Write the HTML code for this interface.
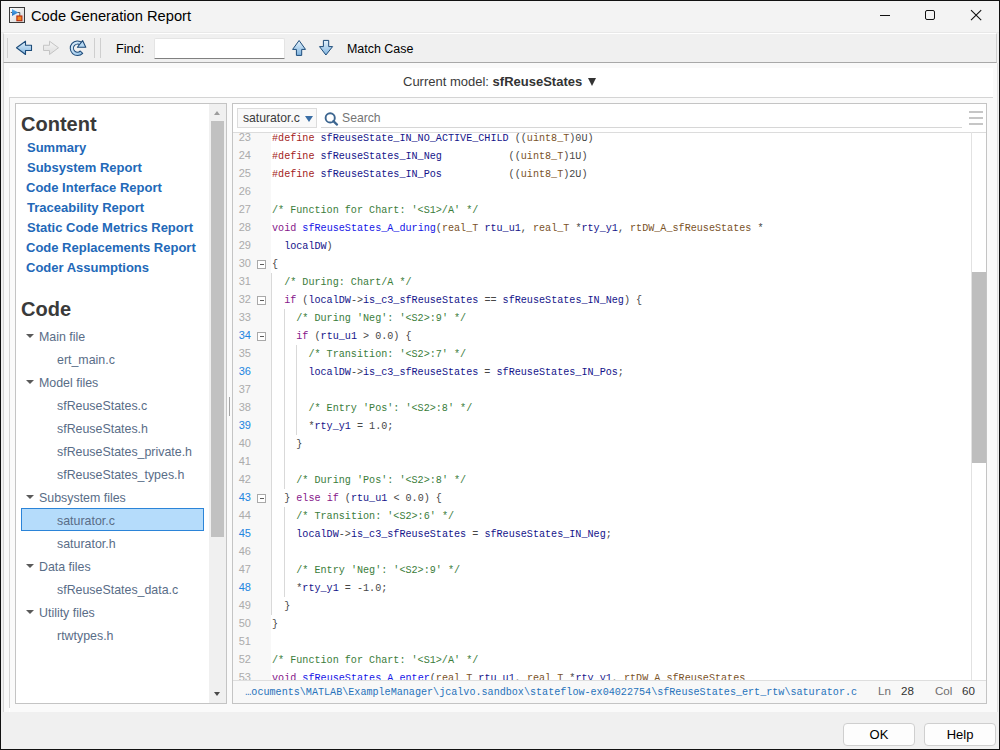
<!DOCTYPE html>
<html><head><meta charset="utf-8">
<style>
*{margin:0;padding:0;box-sizing:border-box}
html,body{width:1000px;height:750px;overflow:hidden;background:#f0f0f0;font-family:"Liberation Sans",sans-serif}
.a{position:absolute}
#win{position:absolute;left:0;top:0;width:1000px;height:750px;border:1px solid #111;background:#f0f0f0}
#title{left:31px;top:6px;font-size:14.7px;color:#000;line-height:20px;white-space:nowrap}
#tb{left:3px;top:33px;width:994px;height:30px;background:#f0f0f0;border-top:1px solid #fff;border-bottom:1px solid #a8a8a8;border-left:1px solid #d0d0d0;border-right:1px solid #d0d0d0}
#content{left:3px;top:63px;width:995px;height:649px;background:#fafafa;border-left:1px solid #d6d6d6;border-right:1px solid #e0e0e0}
.txt{white-space:nowrap}
#lp{left:15px;top:103px;width:212px;height:601px;border:1px solid #c8c8c8;background:#fff}
#rp{left:232px;top:103px;width:755px;height:601px;border:1px solid #c8c8c8;background:#fff}
.lnk{position:absolute;left:12px;font-size:13px;font-weight:bold;color:#1f62ad;white-space:nowrap;line-height:16px}
.h{position:absolute;left:5px;font-size:20px;font-weight:bold;color:#333;white-space:nowrap;line-height:24px}
.ti{position:absolute;font-size:12.6px;color:#4f627a;white-space:nowrap;line-height:16px}
.tri{position:absolute;width:0;height:0;border-left:4px solid transparent;border-right:4px solid transparent;border-top:5px solid #555}
.code{position:absolute;left:0;top:0;font-family:"Liberation Mono",monospace;font-size:10.12px;white-space:pre;line-height:18px;color:#474747}
.ln{position:absolute;width:18px;text-align:right;font-family:"Liberation Sans",sans-serif;font-size:11px;color:#ababab;line-height:18px}
.ln.b{color:#2185e0}
.kw{color:#86168a}
.pp{color:#a3231b}
.id{color:#14148a}
.fn{color:#1414e6}
.cm{color:#3b7d3b}
.ty{color:#7a5228}
.btn{position:absolute;height:23px;border:1px solid #cfcfcf;border-radius:4px;background:#fdfdfd;font-size:13px;text-align:center;line-height:21px;color:#000}
</style></head><body>
<div id="win">
</div>
<div class="a" style="left:1px;top:1px;width:998px;height:31px;background:#f3f3f3"></div>
<div class="a" style="left:1px;top:32px;width:998px;height:1px;background:#e8e8e8"></div>
<!-- title bar -->
<svg class="a" style="left:9px;top:7px" width="16" height="16" viewBox="0 0 16 16">
 <defs><linearGradient id="ig" x1="0" y1="0" x2="1" y2="1"><stop offset="0" stop-color="#ffffff"/><stop offset="1" stop-color="#d4d4d4"/></linearGradient>
 <linearGradient id="it" x1="0" y1="0" x2="0" y2="1"><stop offset="0" stop-color="#5ab4f0"/><stop offset="1" stop-color="#1f6fc0"/></linearGradient></defs>
 <rect x="0.5" y="0.5" width="15" height="15" fill="url(#ig)" stroke="#3a3a3a"/>
 <path d="M1.8 5.5H10.8V9.5" stroke="#4a4a4a" fill="none" stroke-width="0.9"/>
 <polygon points="3,1.9 3,8.9 9.3,5.5" fill="url(#it)"/>
 <rect x="7.9" y="9" width="5" height="4.7" fill="#f08a20" stroke="#b8280c" stroke-width="1.1"/>
</svg>
<div id="title" class="a">Code Generation Report</div>
<div class="a" style="left:880px;top:15px;width:10px;height:1px;background:#111"></div>
<div class="a" style="left:925px;top:10px;width:10px;height:10px;border:1px solid #111;border-radius:2px"></div>
<svg class="a" style="left:970px;top:9px" width="13" height="13" viewBox="0 0 13 13"><path d="M1 1.2L11.2 11.2M11.2 1.2L1 11.2" stroke="#111" stroke-width="1.1"/></svg>

<!-- toolbar -->
<div id="tb" class="a"></div>
<div class="a" style="left:7px;top:38px;width:1px;height:20px;background:#cfcfcf"></div>
<div class="a" style="left:94px;top:38px;width:1px;height:20px;background:#cfcfcf"></div>
<div class="a" style="left:100px;top:38px;width:1px;height:20px;background:#cfcfcf"></div>
<svg class="a" style="left:0;top:0" width="420" height="64" viewBox="0 0 420 64">
 <defs>
  <linearGradient id="bg1" x1="0" y1="0" x2="0" y2="1"><stop offset="0" stop-color="#e4f2fc"/><stop offset="1" stop-color="#7fb3de"/></linearGradient>
  <linearGradient id="bg3" x1="0" y1="0" x2="1" y2="1"><stop offset="0" stop-color="#eaf6fe"/><stop offset="1" stop-color="#8cbde6"/></linearGradient>
  <linearGradient id="bg2" x1="0" y1="0" x2="0" y2="1"><stop offset="0" stop-color="#f4f4f4"/><stop offset="1" stop-color="#dedede"/></linearGradient>
 </defs>
 <polygon points="16.5,47.75 25.5,41.2 25.5,45.25 31.5,45.25 31.5,50.5 25.5,50.5 25.5,54.5" fill="url(#bg1)" stroke="#1d4c7a" stroke-width="1.1" stroke-linejoin="round"/>
 <polygon points="58.5,47.75 49.5,41.2 49.5,45.25 43.5,45.25 43.5,50.5 49.5,50.5 49.5,54.5" fill="url(#bg2)" stroke="#c4c4c4" stroke-width="1"/>
 <path d="M82.2 42.6 A7.3 7.3 0 1 0 82.7 53.4 L80.3 51 A4 4 0 1 1 80.1 45.1 Z" fill="url(#bg3)" stroke="#1e4a78" stroke-width="1.05" stroke-linejoin="round"/>
 <polygon points="77.4,47.3 82.6,40.6 85.8,47.3" fill="#b6d9f3" stroke="#1e4a78" stroke-width="1.05" stroke-linejoin="round"/>
 <polygon points="299.1,40.5 292.6,49.4 296.4,49.4 296.4,55.4 301.7,55.4 301.7,49.4 305.5,49.4" fill="url(#bg1)" stroke="#1d4c7a" stroke-width="1" stroke-linejoin="round"/>
 <polygon points="325.9,55 319.5,46.6 323.4,46.6 323.4,40.4 328.7,40.4 328.7,46.6 332.6,46.6" fill="url(#bg1)" stroke="#1d4c7a" stroke-width="1" stroke-linejoin="round"/>
</svg>
<div class="a txt" style="left:116px;top:42px;font-size:12.7px;line-height:15px;color:#000">Find:</div>
<div class="a" style="left:154px;top:38px;width:131px;height:21px;background:#fff;border:1px solid #e4e4e4;border-bottom:1px solid #808080;border-radius:2px 2px 0 0"></div>
<div class="a txt" style="left:347px;top:42px;font-size:12.45px;line-height:15px;color:#000">Match Case</div>

<!-- content -->
<div id="content" class="a"></div>
<div class="a" style="left:9px;top:68px;width:984px;height:644px;background:#fff"></div>
<div class="a txt" style="left:403px;top:72.00px;font-size:13px;line-height:20px;color:#3a3a3a">Current model: <b style="color:#333">sfReuseStates</b> </div>
<div class="a" style="left:588px;top:78px;width:0;height:0;border-left:4.5px solid transparent;border-right:4.5px solid transparent;border-top:8.5px solid #333"></div>
<div class="a" style="left:9px;top:97px;width:984px;height:1px;background:#d4d4d4"></div>
<div class="a" style="left:9px;top:97px;width:1px;height:611px;background:#d4d4d4"></div>
<div class="a" style="left:10px;top:98px;width:983px;height:614px;background:#fafafa"></div>
<div class="a" style="left:15px;top:103px;width:212px;height:601px;border:1px solid #c4c4c4;background:#fff"></div>
<div class="a txt" style="left:21px;top:111.57px;font-size:20px;line-height:24px;font-weight:bold;color:#3a3a3a">Content</div>
<div class="a txt" style="left:27px;top:137.50px;font-size:13px;line-height:20px;font-weight:bold;color:#2268b8">Summary</div>
<div class="a txt" style="left:27px;top:157.50px;font-size:13px;line-height:20px;font-weight:bold;color:#2268b8">Subsystem Report</div>
<div class="a txt" style="left:26px;top:177.50px;font-size:13px;line-height:20px;font-weight:bold;color:#2268b8">Code Interface Report</div>
<div class="a txt" style="left:27px;top:197.50px;font-size:13px;line-height:20px;font-weight:bold;color:#2268b8">Traceability Report</div>
<div class="a txt" style="left:27px;top:217.50px;font-size:13px;line-height:20px;font-weight:bold;color:#2268b8">Static Code Metrics Report</div>
<div class="a txt" style="left:26px;top:237.50px;font-size:13px;line-height:20px;font-weight:bold;color:#2268b8">Code Replacements Report</div>
<div class="a txt" style="left:26px;top:257.50px;font-size:13px;line-height:20px;font-weight:bold;color:#2268b8">Coder Assumptions</div>
<div class="a txt" style="left:21px;top:296.57px;font-size:20px;line-height:24px;font-weight:bold;color:#3a3a3a">Code</div>
<div class="a" style="left:26px;top:334.00px;width:0;height:0;border-left:4px solid transparent;border-right:4px solid transparent;border-top:4.5px solid #5a5a5a"></div>
<div class="a txt" style="left:39px;top:327.30px;font-size:12.4px;line-height:20px;color:#596d87">Main file</div>
<div class="a txt" style="left:57px;top:350.30px;font-size:12.4px;line-height:20px;color:#596d87">ert_main.c</div>
<div class="a" style="left:26px;top:380.00px;width:0;height:0;border-left:4px solid transparent;border-right:4px solid transparent;border-top:4.5px solid #5a5a5a"></div>
<div class="a txt" style="left:39px;top:373.30px;font-size:12.4px;line-height:20px;color:#596d87">Model files</div>
<div class="a txt" style="left:57px;top:396.30px;font-size:12.4px;line-height:20px;color:#596d87">sfReuseStates.c</div>
<div class="a txt" style="left:57px;top:419.30px;font-size:12.4px;line-height:20px;color:#596d87">sfReuseStates.h</div>
<div class="a txt" style="left:57px;top:442.30px;font-size:12.4px;line-height:20px;color:#596d87">sfReuseStates_private.h</div>
<div class="a txt" style="left:57px;top:465.30px;font-size:12.4px;line-height:20px;color:#596d87">sfReuseStates_types.h</div>
<div class="a" style="left:26px;top:495.00px;width:0;height:0;border-left:4px solid transparent;border-right:4px solid transparent;border-top:4.5px solid #5a5a5a"></div>
<div class="a txt" style="left:39px;top:488.30px;font-size:12.4px;line-height:20px;color:#596d87">Subsystem files</div>
<div class="a" style="left:21px;top:508px;width:183px;height:23px;background:#b5dcfb;border:1px solid #2b84d8"></div>
<div class="a txt" style="left:57px;top:511.30px;font-size:12.4px;line-height:20px;color:#596d87">saturator.c</div>
<div class="a txt" style="left:57px;top:534.30px;font-size:12.4px;line-height:20px;color:#596d87">saturator.h</div>
<div class="a" style="left:26px;top:564.00px;width:0;height:0;border-left:4px solid transparent;border-right:4px solid transparent;border-top:4.5px solid #5a5a5a"></div>
<div class="a txt" style="left:39px;top:557.30px;font-size:12.4px;line-height:20px;color:#596d87">Data files</div>
<div class="a txt" style="left:57px;top:580.30px;font-size:12.4px;line-height:20px;color:#596d87">sfReuseStates_data.c</div>
<div class="a" style="left:26px;top:610.00px;width:0;height:0;border-left:4px solid transparent;border-right:4px solid transparent;border-top:4.5px solid #5a5a5a"></div>
<div class="a txt" style="left:39px;top:603.30px;font-size:12.4px;line-height:20px;color:#596d87">Utility files</div>
<div class="a txt" style="left:57px;top:626.30px;font-size:12.4px;line-height:20px;color:#596d87">rtwtypes.h</div>
<div class="a" style="left:209px;top:104px;width:17px;height:599px;background:#f0f0f0"></div>
<div class="a" style="left:211px;top:121px;width:13px;height:416px;background:#c1c1c1"></div>
<div class="a" style="left:214px;top:111px;width:0;height:0;border-left:3.5px solid transparent;border-right:3.5px solid transparent;border-bottom:4px solid #9c9c9c"></div>
<div class="a" style="left:214px;top:691.5px;width:0;height:0;border-left:3.5px solid transparent;border-right:3.5px solid transparent;border-top:4px solid #4a4a4a"></div>
<div class="a" style="left:229px;top:397px;width:1px;height:19px;background:#a4a4a4"></div>
<div class="a" style="left:232px;top:103px;width:755px;height:601px;border:1px solid #c4c4c4;background:#fff"></div>

<div class="a" style="left:237px;top:108px;width:80px;height:20px;border:1px solid #dcdcdc;background:#f9f9f9"></div>
<div class="a txt" style="left:243px;top:107.57px;font-size:12.2px;line-height:20px;color:#3c3c3c">saturator.c</div>
<div class="a" style="left:305px;top:116px;width:0;height:0;border-left:4px solid transparent;border-right:4px solid transparent;border-top:6px solid #3a6ea5"></div>
<svg class="a" style="left:322px;top:110px" width="18" height="16" viewBox="0 0 18 16"><circle cx="8.2" cy="7.9" r="4.6" fill="none" stroke="#3d6690" stroke-width="1.9"/><path d="M11.4 11.1L15 14.6" stroke="#3d6690" stroke-width="2.2" stroke-linecap="round"/></svg>
<div class="a txt" style="left:342px;top:108.37px;font-size:12.2px;line-height:20px;color:#757575">Search</div>
<div class="a" style="left:321px;top:127px;width:641px;height:1px;background:#d6d6d6"></div>
<div class="a" style="left:969px;top:111px;width:14px;height:2px;background:#c6c6c6"></div>
<div class="a" style="left:969px;top:117px;width:14px;height:2px;background:#c6c6c6"></div>
<div class="a" style="left:969px;top:123px;width:14px;height:2px;background:#c6c6c6"></div>
<div class="a" style="left:233px;top:132px;width:753px;height:1px;background:#dcdcdc"></div>
<div class="a" style="left:233px;top:133px;width:738px;height:547px;overflow:hidden;background:#fff">
<div class="a" style="left:0;top:0;width:38px;height:547px;background:#f8f8f8"></div>
<div class="a ln" style="left:0;width:18px;top:-5.01px">23</div>
<div class="a code" style="left:39px;top:-2.89px"><span class="pp">#define</span> <span class="id">sfReuseState_IN_NO_ACTIVE_CHILD</span> ((<span class="ty">uint8_T</span>)0U)</div>
<div class="a ln" style="left:0;width:18px;top:12.99px">24</div>
<div class="a code" style="left:39px;top:15.11px"><span class="pp">#define</span> <span class="id">sfReuseStates_IN_Neg</span>           ((<span class="ty">uint8_T</span>)1U)</div>
<div class="a ln" style="left:0;width:18px;top:30.99px">25</div>
<div class="a code" style="left:39px;top:33.11px"><span class="pp">#define</span> <span class="id">sfReuseStates_IN_Pos</span>           ((<span class="ty">uint8_T</span>)2U)</div>
<div class="a ln" style="left:0;width:18px;top:48.99px">26</div>
<div class="a code" style="left:39px;top:51.11px"></div>
<div class="a ln" style="left:0;width:18px;top:66.99px">27</div>
<div class="a code" style="left:39px;top:69.11px"><span class="cm">/* Function for Chart: &#x27;&lt;S1&gt;/A&#x27; */</span></div>
<div class="a ln" style="left:0;width:18px;top:84.99px">28</div>
<div class="a code" style="left:39px;top:87.11px"><span class="kw">void</span> <span class="fn">sfReuseStates_A_during</span>(<span class="ty">real_T</span> <span class="id">rtu_u1</span>, <span class="ty">real_T</span> *<span class="id">rty_y1</span>, <span class="ty">rtDW_A_sfReuseStates</span> *</div>
<div class="a ln" style="left:0;width:18px;top:102.99px">29</div>
<div class="a code" style="left:39px;top:105.11px">  <span class="id">localDW</span>)</div>
<div class="a ln" style="left:0;width:18px;top:120.99px">30</div>
<div class="a" style="left:24px;top:127.00px;width:9px;height:9px;border:1px solid #a9a9a9;background:#fff"><div class="a" style="left:1.5px;top:3px;width:4px;height:1px;background:#5c5c5c"></div></div>
<div class="a code" style="left:39px;top:123.11px">{</div>
<div class="a ln" style="left:0;width:18px;top:138.99px">31</div>
<div class="a code" style="left:39px;top:141.11px">  <span class="cm">/* During: Chart/A */</span></div>
<div class="a ln" style="left:0;width:18px;top:156.99px">32</div>
<div class="a" style="left:24px;top:163.00px;width:9px;height:9px;border:1px solid #a9a9a9;background:#fff"><div class="a" style="left:1.5px;top:3px;width:4px;height:1px;background:#5c5c5c"></div></div>
<div class="a code" style="left:39px;top:159.11px">  <span class="kw">if</span> (<span class="id">localDW</span>-&gt;<span class="id">is_c3_sfReuseStates</span> == <span class="id">sfReuseStates_IN_Neg</span>) {</div>
<div class="a ln" style="left:0;width:18px;top:174.99px">33</div>
<div class="a code" style="left:39px;top:177.11px">    <span class="cm">/* During &#x27;Neg&#x27;: &#x27;&lt;S2&gt;:9&#x27; */</span></div>
<div class="a ln b" style="left:0;width:18px;top:192.99px">34</div>
<div class="a" style="left:24px;top:199.00px;width:9px;height:9px;border:1px solid #a9a9a9;background:#fff"><div class="a" style="left:1.5px;top:3px;width:4px;height:1px;background:#5c5c5c"></div></div>
<div class="a code" style="left:39px;top:195.11px">    <span class="kw">if</span> (<span class="id">rtu_u1</span> &gt; 0.0) {</div>
<div class="a ln" style="left:0;width:18px;top:210.99px">35</div>
<div class="a code" style="left:39px;top:213.11px">      <span class="cm">/* Transition: &#x27;&lt;S2&gt;:7&#x27; */</span></div>
<div class="a ln b" style="left:0;width:18px;top:228.99px">36</div>
<div class="a code" style="left:39px;top:231.11px">      <span class="id">localDW</span>-&gt;<span class="id">is_c3_sfReuseStates</span> = <span class="id">sfReuseStates_IN_Pos</span>;</div>
<div class="a ln" style="left:0;width:18px;top:246.99px">37</div>
<div class="a code" style="left:39px;top:249.11px"></div>
<div class="a ln" style="left:0;width:18px;top:264.99px">38</div>
<div class="a code" style="left:39px;top:267.11px">      <span class="cm">/* Entry &#x27;Pos&#x27;: &#x27;&lt;S2&gt;:8&#x27; */</span></div>
<div class="a ln b" style="left:0;width:18px;top:282.99px">39</div>
<div class="a code" style="left:39px;top:285.11px">      *<span class="id">rty_y1</span> = 1.0;</div>
<div class="a ln" style="left:0;width:18px;top:300.99px">40</div>
<div class="a code" style="left:39px;top:303.11px">    }</div>
<div class="a ln" style="left:0;width:18px;top:318.99px">41</div>
<div class="a code" style="left:39px;top:321.11px"></div>
<div class="a ln" style="left:0;width:18px;top:336.99px">42</div>
<div class="a code" style="left:39px;top:339.11px">    <span class="cm">/* During &#x27;Pos&#x27;: &#x27;&lt;S2&gt;:8&#x27; */</span></div>
<div class="a ln b" style="left:0;width:18px;top:354.99px">43</div>
<div class="a" style="left:24px;top:361.00px;width:9px;height:9px;border:1px solid #a9a9a9;background:#fff"><div class="a" style="left:1.5px;top:3px;width:4px;height:1px;background:#5c5c5c"></div></div>
<div class="a code" style="left:39px;top:357.11px">  } <span class="kw">else</span> <span class="kw">if</span> (<span class="id">rtu_u1</span> &lt; 0.0) {</div>
<div class="a ln" style="left:0;width:18px;top:372.99px">44</div>
<div class="a code" style="left:39px;top:375.11px">    <span class="cm">/* Transition: &#x27;&lt;S2&gt;:6&#x27; */</span></div>
<div class="a ln b" style="left:0;width:18px;top:390.99px">45</div>
<div class="a code" style="left:39px;top:393.11px">    <span class="id">localDW</span>-&gt;<span class="id">is_c3_sfReuseStates</span> = <span class="id">sfReuseStates_IN_Neg</span>;</div>
<div class="a ln" style="left:0;width:18px;top:408.99px">46</div>
<div class="a code" style="left:39px;top:411.11px"></div>
<div class="a ln" style="left:0;width:18px;top:426.99px">47</div>
<div class="a code" style="left:39px;top:429.11px">    <span class="cm">/* Entry &#x27;Neg&#x27;: &#x27;&lt;S2&gt;:9&#x27; */</span></div>
<div class="a ln b" style="left:0;width:18px;top:444.99px">48</div>
<div class="a code" style="left:39px;top:447.11px">    *<span class="id">rty_y1</span> = -1.0;</div>
<div class="a ln" style="left:0;width:18px;top:462.99px">49</div>
<div class="a code" style="left:39px;top:465.11px">  }</div>
<div class="a ln" style="left:0;width:18px;top:480.99px">50</div>
<div class="a code" style="left:39px;top:483.11px">}</div>
<div class="a ln" style="left:0;width:18px;top:498.99px">51</div>
<div class="a code" style="left:39px;top:501.11px"></div>
<div class="a ln" style="left:0;width:18px;top:516.99px">52</div>
<div class="a code" style="left:39px;top:519.11px"><span class="cm">/* Function for Chart: &#x27;&lt;S1&gt;/A&#x27; */</span></div>
<div class="a ln" style="left:0;width:18px;top:534.99px">53</div>
<div class="a code" style="left:39px;top:537.11px"><span class="kw">void</span> <span class="fn">sfReuseStates_A_enter</span>(<span class="ty">real_T</span> <span class="id">rtu_u1</span>, <span class="ty">real_T</span> *<span class="id">rty_y1</span>, <span class="ty">rtDW_A_sfReuseStates</span></div>
<div class="a" style="left:38px;top:140px;width:1px;height:342px;background:#d9d9d9"></div>
<div class="a" style="left:51px;top:176px;width:1px;height:180px;background:#d9d9d9"></div>
<div class="a" style="left:51px;top:374px;width:1px;height:90px;background:#d9d9d9"></div>
<div class="a" style="left:63px;top:212px;width:1px;height:90px;background:#d9d9d9"></div>
</div>
<div class="a" style="left:971px;top:132px;width:1px;height:548px;background:#e2e2e2"></div>
<div class="a" style="left:972px;top:272px;width:14px;height:191px;background:#bebebe"></div>
<div class="a" style="left:233px;top:680px;width:753px;height:23px;background:#f8f8f8;border-top:1px solid #dedede"></div>
<div class="a code" style="left:245.3px;top:683.617712px;font-size:10.1px;color:#2672bb">&#8230;ocuments\MATLAB\ExampleManager\jcalvo.sandbox\stateflow-ex04022754\sfReuseStates_ert_rtw\saturator.c</div>
<div class="a txt" style="left:878px;top:681.18px;font-size:11.6px;line-height:20px;color:#6f6f6f">Ln</div>
<div class="a txt" style="left:901px;top:681.18px;font-size:11.6px;line-height:20px;color:#333">28</div>
<div class="a txt" style="left:935px;top:681.18px;font-size:11.6px;line-height:20px;color:#6f6f6f">Col</div>
<div class="a txt" style="left:962px;top:681.18px;font-size:11.6px;line-height:20px;color:#333">60</div>
<!-- buttons -->
<div class="btn" style="left:843px;top:723px;width:72px">OK</div>
<div class="btn" style="left:924px;top:723px;width:72px">Help</div>
</body></html>
